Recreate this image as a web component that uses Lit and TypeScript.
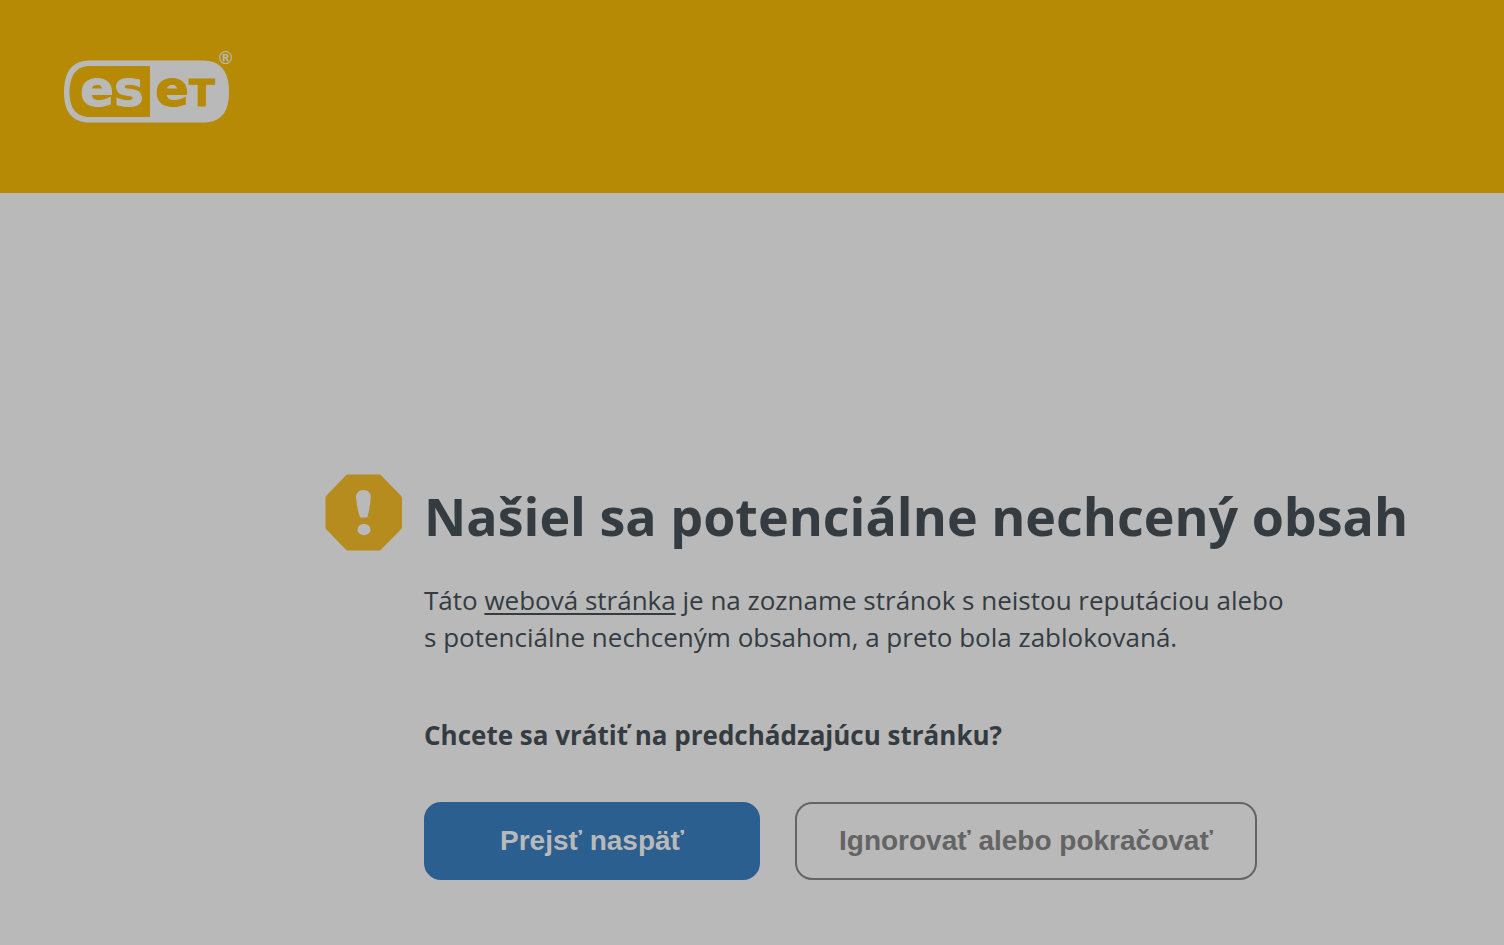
import { LitElement, html, css } from "lit";
import { customElement } from "lit/decorators.js";

@customElement("brand-logo")
export class BrandLogo extends LitElement {
  static styles = css`
    :host {
      display: block;
    }
    .mark {
      display: block;
      width: 176px;
      height: 80px;
    }
    .light {
      fill: #b9b9b9;
      stroke: #b9b9b9;
    }
    .dark {
      fill: #b68a05;
      stroke: #b68a05;
    }
    .shape {
      stroke: none;
    }
    .letters {
      font: bold 50px "DejaVu Sans", sans-serif;
      stroke-width: 1px;
    }
    .cap {
      font-size: 38px;
    }
    .registered {
      font: bold 18px "Liberation Sans", sans-serif;
      stroke: none;
    }
  `;

  render() {
    return html`
      <svg class="mark" viewBox="0 -6 176 80" role="img" aria-label="ESET">
        <path
          class="light shape"
          d="M26 10.500H139C157 10.500 165 22 165 42S157 72.500 139 72.500H26C8 72.500 0 62 0 42S8 10.500 26 10.500Z"
        />
        <path
          class="dark shape"
          d="M26 16H86V67H26C12 67 5.500 58 5.500 42S12 16 26 16Z"
        />
        <text class="letters light" x="16" y="56">es</text>
        <text class="letters dark" x="91" y="56">e<tspan class="cap">T</tspan></text>
        <text class="registered light" x="155" y="14">®</text>
      </svg>
    `;
  }
}

@customElement("app-root")
export class AppRoot extends LitElement {
  static styles = css`
    :host {
      display: block;
      min-height: 100vh;
      background: #b9b9b9;
      color: #343c42;
      font-family: "Segoe UI", "Open Sans", "Noto Sans", sans-serif;
    }
    .header {
      background: #b68a05;
      padding: 44px 64px 69px;
    }
    .notice {
      display: grid;
      grid-template-columns: 78px minmax(0, 1fr);
      column-gap: 21px;
      padding: 281px 64px 64px 325px;
    }
    .icon {
      display: block;
      width: 78px;
      height: 78px;
    }
    .title {
      margin: 6px 0 0;
      font-size: 52px;
      line-height: 72px;
      font-weight: 700;
    }
    .text {
      max-width: 900px;
      margin: 30px 0 0;
      font-size: 26px;
      line-height: 37px;
    }
    .link {
      color: inherit;
      text-decoration-thickness: 2px;
      text-underline-offset: 3px;
      text-decoration-skip-ink: none;
    }
    .question {
      margin: 61px 0 0;
      font-size: 26px;
      line-height: 37px;
      font-weight: 700;
    }
    .actions {
      display: flex;
      flex-wrap: wrap;
      gap: 35px;
      margin-top: 48px;
    }
    .button {
      min-width: 336px;
      height: 78px;
      padding: 0 42px;
      border: 2px solid #646464;
      border-radius: 17px;
      background: transparent;
      color: #646464;
      font: bold 28px "Liberation Sans", Arial, sans-serif;
      cursor: pointer;
    }
    .primary {
      border-color: #2b5f90;
      background: #2b5f90;
      color: #b9b9b9;
    }
  `;

  render() {
    return html`
      <header class="header"><brand-logo></brand-logo></header>
      <main class="notice">
        <svg class="icon" viewBox="0 0 78 78" aria-hidden="true">
          <path
            fill="#b68c1e"
            d="M23 .5H54Q55 .5 56 1.300L76.200 22Q77 23 77 24V53Q77 54 76.200 55L56 75.700Q55 76.500 54 76.500H23Q22 76.500 21 75.700L1 55Q.5 54 .5 53V24Q.5 23 1 22L21 1.300Q22 .5 23 .5Z"
          />
          <path
            fill="#b9b9b9"
            d="M38.500 16C43 16 46 19 45.700 23.500C45.300 31 43.800 38 42.500 42.500Q42.300 43.500 41.500 43.500H36Q35 43.500 34.700 42.500C33 37 31.500 30 31 23.500C30.800 19 34 16 38.500 16Z"
          />
          <ellipse cx="39" cy="55.500" rx="6.500" ry="5.700" fill="#b9b9b9" />
        </svg>
        <div>
          <h1 class="title">Našiel sa potenciálne nechcený obsah</h1>
          <p class="text">
            Táto <a class="link" href="#">webová stránka</a> je na zozname stránok
            s&nbsp;neistou reputáciou alebo s&nbsp;potenciálne nechceným obsahom, a&nbsp;preto
            bola zablokovaná.
          </p>
          <p class="question">Chcete sa vrátiť na predchádzajúcu stránku?</p>
          <div class="actions">
            <button class="button primary" type="button">Prejsť naspäť</button>
            <button class="button" type="button">Ignorovať alebo pokračovať</button>
          </div>
        </div>
      </main>
    `;
  }
}
